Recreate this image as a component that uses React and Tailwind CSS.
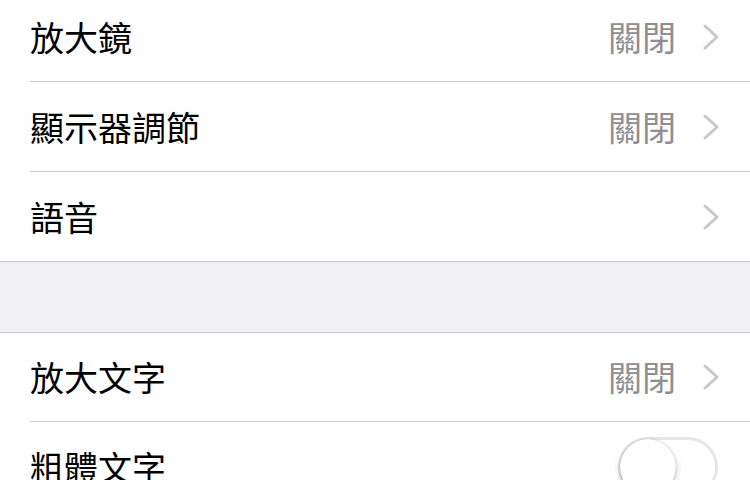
import React from "react";

const font = { fontFamily: '"Noto Sans CJK TC", "Noto Sans", sans-serif' };

const Chevron = () => (
  <svg width="18" height="26" viewBox="0 0 18 26" className="ml-[26px]">
    <path d="M3 2 L15 13 L3 24" fill="none" stroke="#c7c7cc" strokeWidth="3" strokeLinecap="round" strokeLinejoin="round" />
  </svg>
);

const Row = ({ label, value, chevron = true, divider = true, h = "h-[90px]", children }) => (
  <div className={`${h} pl-[30px] bg-white`}>
    <div className={`h-full flex items-center pr-[30px] ${divider ? "border-b border-[#c8c7cc]" : ""}`}>
      <span className="flex-1 text-[34px] text-black leading-none">{label}</span>
      {value && <span className="text-[34px] text-[#8e8e93] leading-none">{value}</span>}
      {chevron && <Chevron />}
      {children}
    </div>
  </div>
);

const Toggle = () => (
  <div className="w-[100px] h-[60px] rounded-full border-[3px] border-[#e5e5ea] bg-white relative mr-[2px]">
    <div className="absolute left-[-1px] top-[-1px] w-[56px] h-[56px] rounded-full bg-white shadow-[0_3px_6px_rgba(0,0,0,0.25),0_0_1px_rgba(0,0,0,0.3)]" />
  </div>
);

export default function App() {
  return (
    <div className="w-[750px] h-[480px] overflow-hidden bg-[#efeff4]" style={font}>
      <div className="mt-[-8px]">
        <Row label="放大鏡" value="關閉" />
        <Row label="顯示器調節" value="關閉" />
        <div className="border-b border-[#c8c7cc]">
          <Row label="語音" divider={false} h="h-[89px]" />
        </div>
        <div className="h-[70px]" />
        <div className="border-t border-[#c8c7cc]">
          <Row label="放大文字" value="關閉" h="h-[89px]" />
          <Row label="粗體文字" chevron={false} divider={false}>
            <Toggle />
          </Row>
        </div>
      </div>
    </div>
  );
}
